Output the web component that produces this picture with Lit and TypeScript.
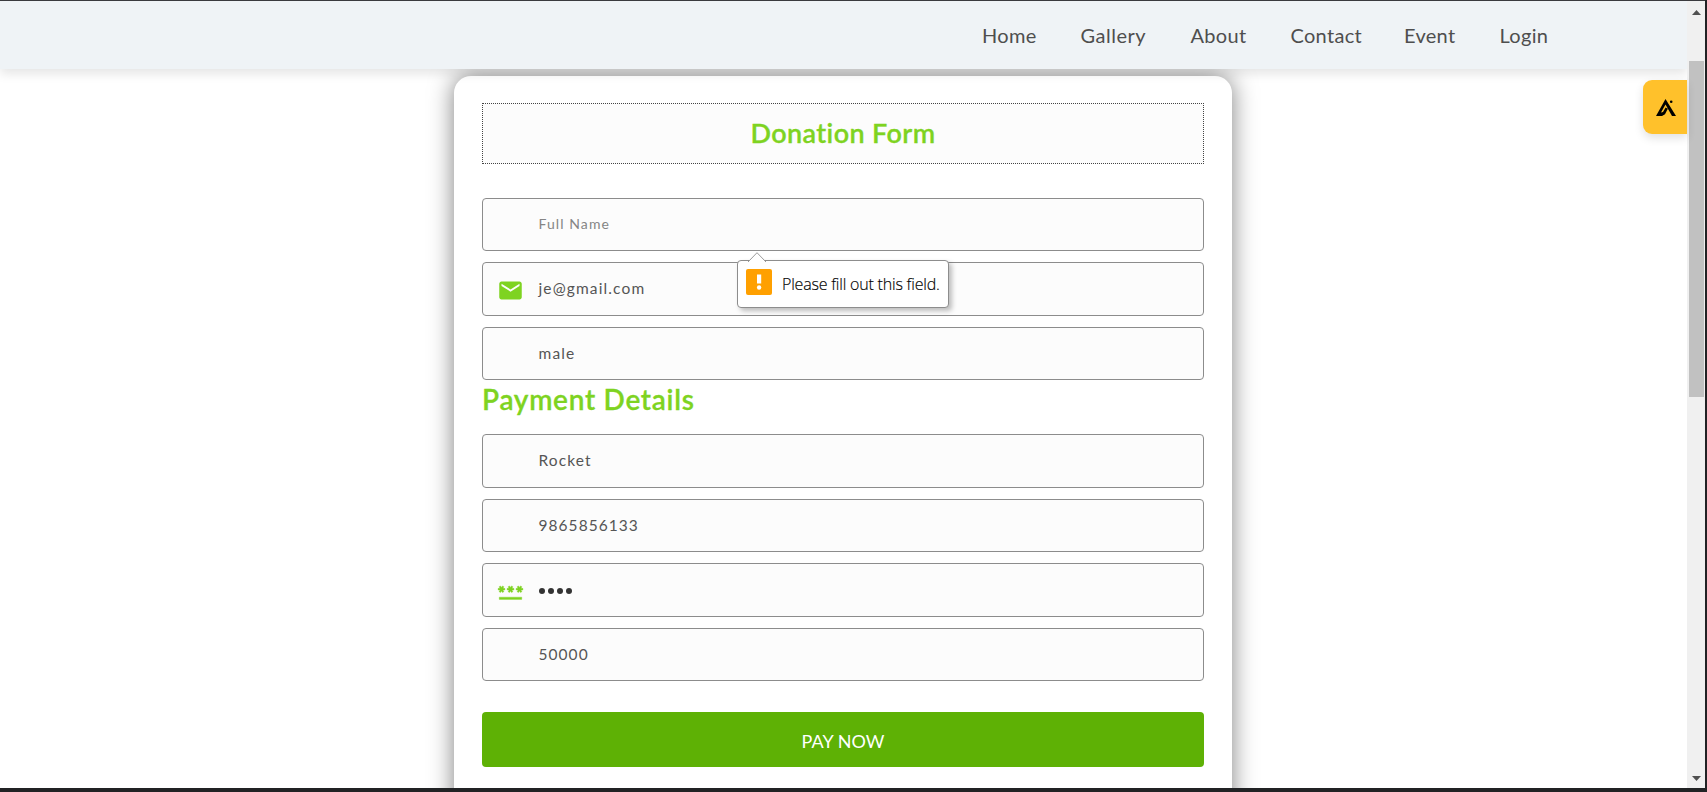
import { LitElement, html, css, svg, nothing } from "lit";
import { customElement, property } from "lit/decorators.js";
import { classMap } from "lit/directives/class-map.js";

const NAV = ["Home", "Gallery", "About", "Contact", "Event", "Login"];

const mailIcon = svg`<svg width="27" height="27" viewBox="0 0 24 24" fill="#7ed321">
  <path d="M20 4H4c-1.100 0-2 .9-2 2v12c0 1.100.9 2 2 2h16c1.100 0 2-.9 2-2V6c0-1.100-.9-2-2-2zm0 4l-8 5-8-5V6l8 5 8-5v2z"/></svg>`;

const passwordIcon = svg`<svg width="27" height="27" viewBox="0 0 24 24" fill="#7ed321" stroke="#7ed321" stroke-width=".3">
  <path d="M2 17h20v2H2v-2zm1.150-4.050L4 11.470l.85 1.480 1.300-.75-.85-1.480H7v-1.500H5.300l.85-1.470L4.850 7 4 8.470 3.150 7l-1.300.75.85 1.470H1v1.500h1.700l-.85 1.480 1.300.75zm6.700-.75l1.300.75.85-1.480.85 1.480 1.300-.75-.85-1.480H15v-1.500h-1.700l.85-1.470-1.300-.75L12 8.470 11.150 7l-1.300.75.85 1.470H9v1.500h1.700l-.85 1.480zM23 9.220h-1.700l.85-1.470-1.300-.75L20 8.470 19.150 7l-1.300.75.85 1.470H17v1.500h1.700l-.85 1.480 1.300.75.85-1.480.85 1.480 1.300-.75-.85-1.480H23v-1.500z"/></svg>`;

@customElement("form-field")
export class FormField extends LitElement {
  @property() value = "";
  @property() kind = "text";
  static styles = css`
    :host { display: block; height: 53.500px; }
    .box {
      box-sizing: border-box; height: 100%; display: grid;
      grid-template-columns: 55.500px 1fr; align-items: center;
      border: 1px solid #8c8c8c; border-radius: 4px; background: #fcfcfc;
    }
    .icon { display: flex; padding: 3.500px 0 0 13.500px; }
    .value { font: 400 15.500px/20px Lato, sans-serif; letter-spacing: 1.130px; color: #555; padding-bottom: 1px; }
    .placeholder { font-size: 14px; letter-spacing: 1.080px; color: #858585; padding-bottom: 0; }
    .digits { letter-spacing: 1.050px; }
    .dots { display: flex; gap: 3px; padding: 3px 0 0; }
    .dot { width: 6px; height: 6px; border-radius: 50%; background: #333; }
  `;
  render() {
    const icon = this.kind === "email" ? mailIcon : this.kind === "password" ? passwordIcon : nothing;
    return html`<div class="box">
      <span class="icon">${icon}</span>
      ${this.kind === "password"
        ? html`<span class="dots">${[0, 1, 2, 3].map(() => html`<i class="dot"></i>`)}</span>`
        : html`<span class=${classMap({ value: true, placeholder: this.kind === "placeholder", digits: this.kind === "number" })}>${this.value}</span>`}
    </div>`;
  }
}

@customElement("app-root")
export class AppRoot extends LitElement {
  static styles = css`
    :host { display: block; height: 792px; overflow: hidden; background: #212224; font-family: Lato, sans-serif; font-variant-ligatures: none; }
    .window {
      position: relative; box-sizing: border-box; height: 788px; width: 1705px;
      border-top: 1px solid #3a3a3e; display: grid; grid-template-columns: 1687px 1fr; overflow: hidden;
    }
    .page { background: #fff; height: 787px; overflow: hidden; display: flex; flex-direction: column; align-items: stretch; }
    header {
      position: relative; z-index: 2; flex: none; height: 68px; box-sizing: border-box; background: #eff3f6;
      box-shadow: 0 5px 10px rgba(0, 0, 0, .1); display: flex; justify-content: flex-end; padding: 0 104.500px 1px 0;
    }
    nav { display: grid; grid-template-columns: 98.500px 110px 100px 113.500px 95.500px 83px; align-items: center; }
    nav a { font-size: 20px; line-height: 28px; letter-spacing: .3px; color: #4e4e4e; }
    nav a:nth-child(2) { letter-spacing: .5px; }
    .card {
      flex: none; box-sizing: border-box; width: 778px; height: 800px; margin: 6.500px 0 0 454px; padding: 27.500px 28px 0;
      border-radius: 17px; background: #fff; box-shadow: 0 0 25px rgba(0, 0, 0, .5);
    }
    .title {
      box-sizing: border-box; height: 61px; margin: 0 0 33.500px; border: 1px dotted #444; background: #fcfcfc;
      display: flex; align-items: center; justify-content: center; padding-bottom: 3px;
      font-size: 27px; font-weight: 600; letter-spacing: .38px; color: #7ed321;
    }
    .title, .sub { -webkit-text-stroke: .3px #7ed321; }
    .fields { display: flex; flex-direction: column; gap: 11px; }
    .sub { margin: 0; height: 54px; font-size: 28px; line-height: 38px; font-weight: 600; letter-spacing: .72px; color: #7ed321; }
    .pay {
      display: block; width: 100%; height: 55px; margin-top: 31px; border: 0; border-radius: 4px; background: #5eb105;
      color: #fff; font: 400 18px Lato, sans-serif; padding: 2px 0 0; letter-spacing: .05px;
    }
    .tip {
      position: absolute; z-index: 3; left: 737px; top: 259px; box-sizing: border-box; width: 212px; height: 48px;
      border: 1px solid #8d8d8d; border-radius: 4px; background: #fff; box-shadow: 3px 3px 5px rgba(0, 0, 0, .25);
      display: flex; align-items: center; gap: 10px; padding: 0 0 4px 8px;
      font: 300 16px "Open Sans", sans-serif; letter-spacing: -.2px; color: #000; white-space: nowrap;
      -webkit-text-stroke: .15px #000;
    }
    .tip .label { padding-top: 4px; }
    .arrow { position: absolute; left: 10px; top: -9.500px; }
    .badge {
      position: absolute; z-index: 3; left: 1643px; top: 79px; width: 44px; height: 54px; border-radius: 9px 0 0 9px;
      background: #ffc12b; box-shadow: 0 4px 10px rgba(0, 0, 0, .12); display: flex; align-items: center; justify-content: center;
    }
    .badge svg { margin: 0 0 0 1px; }
    .scroll { background: #f0f0f0; display: flex; flex-direction: column; align-items: center; height: 787px; }
    .scroll .up { margin: 9px 0 0 1px; }
    .thumb { width: 15px; height: 336px; margin-top: 46px; background: #c1c1c1; }
    .scroll .down { margin: auto 0 7px 1px; }
    svg { display: block; }
  `;
  render() {
    return html`<div class="window">
      <div class="page">
        <header><nav>${NAV.map((n) => html`<a>${n}</a>`)}</nav></header>
        <main class="card">
          <h1 class="title"><span>Donation Form</span></h1>
          <div class="fields">
            <form-field kind="placeholder" value="Full Name"></form-field>
            <form-field kind="email" value="je@gmail.com"></form-field>
            <form-field value="male"></form-field>
          </div>
          <h2 class="sub">Payment Details</h2>
          <div class="fields">
            <form-field value="Rocket"></form-field>
            <form-field kind="number" value="9865856133"></form-field>
            <form-field kind="password"></form-field>
            <form-field kind="number" value="50000"></form-field>
          </div>
          <button class="pay">PAY NOW</button>
        </main>
      </div>
      <div class="scroll">
        <svg class="up" width="9" height="5" viewBox="0 0 9 5"><path d="M4.500 0L9 5H0z" fill="#505050"/></svg>
        <div class="thumb"></div>
        <svg class="down" width="9" height="5" viewBox="0 0 9 5"><path d="M0 0h9L4.500 5z" fill="#505050"/></svg>
      </div>
      <div class="tip" role="tooltip">
        <svg class="arrow" width="18" height="10" viewBox="0 0 18 10"><path d="M0 10L9 .7 18 10" fill="#fff" stroke="#9a9a9a"/></svg>
        <svg width="26" height="26" viewBox="0 0 26 26"><rect width="26" height="26" rx="2" fill="#ffa000"/><path d="M11 5.500h4.200v9h-4.200z" fill="#fff"/><circle cx="13.100" cy="18.500" r="2.200" fill="#fff"/></svg>
        <span class="label">Please fill out this field.</span>
      </div>
      <div class="badge">
        <svg width="20" height="17" viewBox="0 0 20 17"><path d="M9.500 0L20 17h-4L9.500 5.500 5 13.500l2-.6 2.600-4.400 2.200 1.200-2.800 5.600L6 17H0z"/><circle cx="15.200" cy="2.800" r="1.300"/></svg>
      </div>
    </div>`;
  }
}
